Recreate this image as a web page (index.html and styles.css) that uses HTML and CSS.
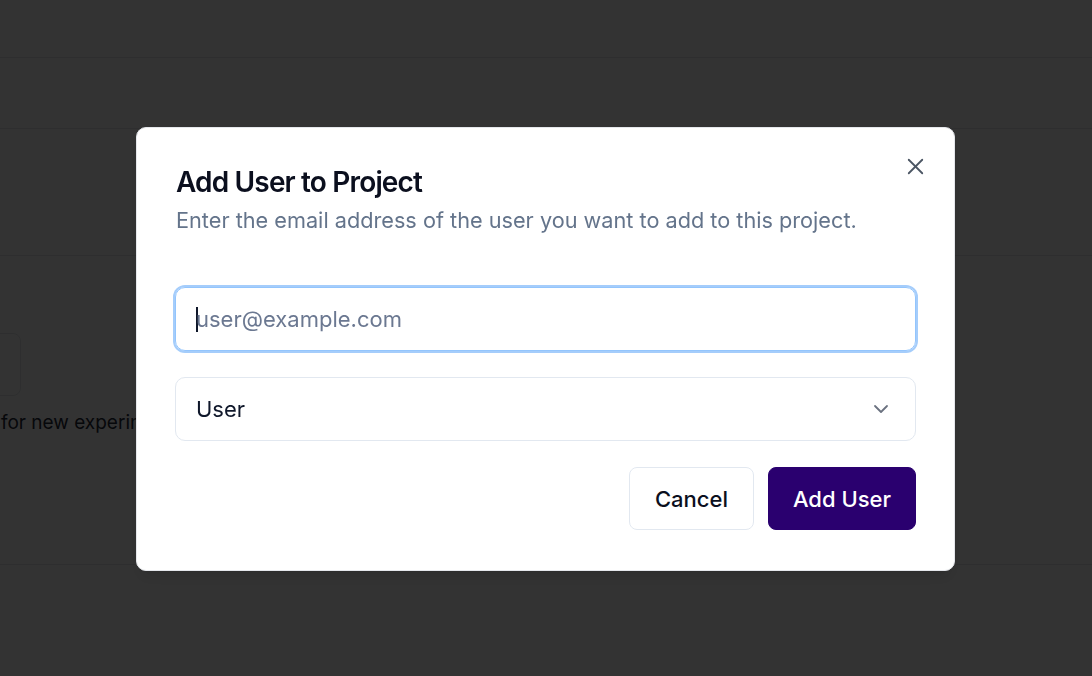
FILE: index.html
```html
<!DOCTYPE html>
<html lang="en">
<head>
<meta charset="utf-8">
<title>Add User to Project</title>
<link rel="stylesheet" href="styles.css">
</head>
<body>
<div class="page">
  <header class="page-header"></header>
  <section class="page-bar"></section>
  <section class="page-section"></section>
  <section class="page-main">
    <div class="bg-card"></div>
    <p class="bg-text">for new experiments</p>
  </section>
</div>

<div class="overlay">
  <div class="dialog" role="dialog" aria-labelledby="dlg-title">
    <button class="close" aria-label="Close">
      <svg width="27" height="27" viewBox="0 0 24 24" fill="none" stroke="currentColor" stroke-width="1.6" stroke-linecap="round" stroke-linejoin="round"><path d="M18 6 6 18"/><path d="m6 6 12 12"/></svg>
    </button>
    <div class="dialog-head">
      <h2 id="dlg-title" class="dialog-title">Add User to Project</h2>
      <p class="dialog-desc">Enter the email address of the user you want to add to this project.</p>
    </div>
    <div class="fields">
      <div class="input focused"><span class="caret"></span><span class="placeholder">user@example.com</span></div>
      <div class="select">
        <span class="select-value">User</span>
        <svg width="24" height="24" viewBox="0 0 24 24" fill="none" stroke="currentColor" stroke-width="1.8" stroke-linecap="round" stroke-linejoin="round"><path d="m6 9 6 6 6-6"/></svg>
      </div>
    </div>
    <div class="actions">
      <button class="btn btn-outline">Cancel</button>
      <button class="btn btn-primary">Add User</button>
    </div>
  </div>
</div>
</body>
</html>
```
FILE: styles.css
```css
* { box-sizing: border-box; }
html, body { margin: 0; padding: 0; }
body {
  width: 1092px;
  height: 676px;
  overflow: hidden;
  font-family: Inter, "Noto Sans", sans-serif;
  background: #ffffff;
  color: #0f172a;
}
.page { width: 100%; height: 100%; }
.page-header { height: 58px; border-bottom: 1px solid #e5e7eb; }
.page-bar { height: 71px; border-bottom: 1px solid #e5e7eb; }
.page-section { height: 127px; border-bottom: 1px solid #e5e7eb; }
.page-main { height: 309px; border-bottom: 1px solid #e5e7eb; padding-top: 77px; }
.bg-card {
  width: 121px;
  height: 63px;
  margin-left: -100px;
  border: 1px solid #e5e7eb;
  border-radius: 8px;
}
.bg-text {
  margin: 15px 0 0 1px;
  font-size: 19px;
  color: #1f2937;
  white-space: nowrap;
}

.overlay {
  position: fixed;
  inset: 0;
  background: rgba(0, 0, 0, 0.8);
  display: flex;
  justify-content: center;
  align-items: flex-start;
  padding-top: 127px;
  padding-right: 1px;
}
.dialog {
  position: relative;
  width: 819px;
  background: #ffffff;
  border-radius: 10px;
  padding: 40px 38px 40px;
  box-shadow: 0 10px 15px -3px rgba(0,0,0,0.1), 0 4px 6px -4px rgba(0,0,0,0.1);
  border: 1px solid #e5e7eb;
}
.close {
  position: absolute;
  top: 25px;
  right: 25px;
  width: 27px;
  height: 27px;
  padding: 0;
  border: 0;
  background: transparent;
  color: #4b5563;
  display: flex;
  align-items: center;
  justify-content: center;
}
.dialog-head { display: flex; flex-direction: column; gap: 8px; }
.dialog-title {
  margin: 0 0 0 1px;
  font-size: 28px;
  line-height: 28px;
  font-weight: 600;
  letter-spacing: -0.03em;
  color: #0b0f1e;
}
.dialog-desc {
  margin: 0 0 0 1px;
  font-size: 21.7px;
  line-height: 33px;
  color: #64748b;
}
.fields {
  margin-top: 50px;
  display: flex;
  flex-direction: column;
  gap: 26px;
}
.input, .select {
  height: 64px;
  border: 1px solid #e2e8f0;
  border-radius: 10px;
  display: flex;
  align-items: center;
  font-size: 22px;
}
.input { padding: 0 20px; }
.input.focused {
  border-color: #93c5fd;
  box-shadow: 0 0 0 2px #a5cdfb;
}
.caret {
  width: 2px;
  height: 25px;
  background: #0f172a;
  margin-right: -2px;
}
.placeholder { color: #6b7891; }
.select {
  justify-content: space-between;
  padding: 0 22px 0 20px;
  color: #0f172a;
}
.select svg { color: #6b7280; }
.actions {
  margin-top: 26px;
  display: flex;
  justify-content: flex-end;
  gap: 14px;
}
.btn {
  height: 63px;
  border-radius: 8px;
  font-family: inherit;
  font-size: 22px;
  font-weight: 500;
}
.btn-outline {
  padding: 0 25px;
  background: #ffffff;
  border: 1px solid #e2e8f0;
  color: #0b0f1e;
}
.btn-primary {
  padding: 0 24px;
  background: #2a006f;
  border: 1px solid #2a006f;
  color: #ffffff;
}
```
